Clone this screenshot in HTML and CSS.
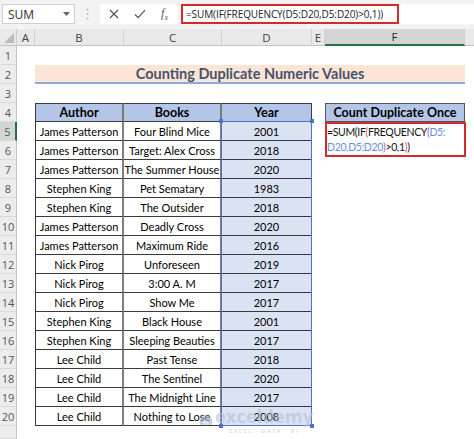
FILE: index.html
```html
<!DOCTYPE html>
<html>
<head>
<meta charset="utf-8">
<link rel="stylesheet" href="styles.css">
</head>
<body>
<div class="toolbar">
  <div class="namebox"><span>SUM</span><svg class="dd" width="7" height="4" viewBox="0 0 7 4"><path d="M0 0h7L3.5 4z" fill="#666"/></svg></div>
  <div class="grip"><svg width="3" height="12" viewBox="0 0 3 12"><circle cx="1.5" cy="1.5" r="1" fill="#bbb"/><circle cx="1.5" cy="6" r="1" fill="#bbb"/><circle cx="1.5" cy="10.5" r="1" fill="#bbb"/></svg></div>
  <div class="fxbox">
    <svg width="10" height="10" viewBox="0 0 10 10"><path d="M1 1L9 9M9 1L1 9" stroke="#555" stroke-width="1.2" fill="none"/></svg>
    <svg width="12" height="10" viewBox="0 0 12 10"><path d="M1 5.5L4.2 8.6L11 1.2" stroke="#555" stroke-width="1.2" fill="none"/></svg>
    <span class="fx">f<sub>x</sub></span>
  </div>
  <div class="formula-bar"><div class="formula">=SUM(IF(FREQUENCY(D5:D20,D5:D20)&gt;0,1))</div></div>
</div>
<div class="sheet">
  <div class="corner"><svg width="10" height="10" viewBox="0 0 10 10"><path d="M10 0V10H0z" fill="#bdbdbd"/></svg></div>
  <div class="ch">A</div><div class="ch">B</div><div class="ch">C</div><div class="ch">D</div><div class="ch">E</div><div class="ch active">F</div><div class="ch last"></div>

  <div class="rh">1</div><div></div><div></div><div></div><div></div><div></div><div></div><div></div>

  <div class="rh">2</div><div></div><div class="title">Counting Duplicate Numeric Values</div><div></div>

  <div class="rh">3</div><div></div><div></div><div></div><div></div><div></div><div></div><div></div>

  <div class="rh">4</div><div></div><div class="th first">Author</div><div class="th">Books</div><div class="th yh">Year</div><div></div><div class="th single">Count Duplicate Once</div><div></div>

  <div class="rh active">5</div><div></div><div class="td first">James Patterson</div><div class="td">Four Blind Mice</div><div class="td yr anchor">2001<div class="range"><i class="h tl"></i><i class="h tr"></i><i class="h bl"></i><i class="h br"></i></div></div><div></div><div class="edit"><div class="editbox">=SUM(IF<span class="p1">(</span>FREQUENCY<span class="p2">(</span><span class="ref">D5:</span><br><span class="ref">D20,D5:D20</span><span class="p2">)</span>&gt;0,1<span class="p1">)</span>)</div></div><div></div>

  <div class="rh">6</div><div></div><div class="td first">James Patterson</div><div class="td">Target: Alex Cross</div><div class="td yr">2018</div><div></div><div></div><div></div>
  <div class="rh">7</div><div></div><div class="td first">James Patterson</div><div class="td">The Summer House</div><div class="td yr">2020</div><div></div><div></div><div></div>
  <div class="rh">8</div><div></div><div class="td first">Stephen King</div><div class="td">Pet Sematary</div><div class="td yr">1983</div><div></div><div></div><div></div>
  <div class="rh">9</div><div></div><div class="td first">Stephen King</div><div class="td">The Outsider</div><div class="td yr">2018</div><div></div><div></div><div></div>
  <div class="rh">10</div><div></div><div class="td first">James Patterson</div><div class="td">Deadly Cross</div><div class="td yr">2020</div><div></div><div></div><div></div>
  <div class="rh">11</div><div></div><div class="td first">James Patterson</div><div class="td">Maximum Ride</div><div class="td yr">2016</div><div></div><div></div><div></div>
  <div class="rh">12</div><div></div><div class="td first">Nick Pirog</div><div class="td">Unforeseen</div><div class="td yr">2019</div><div></div><div></div><div></div>
  <div class="rh">13</div><div></div><div class="td first">Nick Pirog</div><div class="td">3:00 A. M</div><div class="td yr">2017</div><div></div><div></div><div></div>
  <div class="rh">14</div><div></div><div class="td first">Nick Pirog</div><div class="td">Show Me</div><div class="td yr">2017</div><div></div><div></div><div></div>
  <div class="rh">15</div><div></div><div class="td first">Stephen King</div><div class="td">Black House</div><div class="td yr">2001</div><div></div><div></div><div></div>
  <div class="rh">16</div><div></div><div class="td first">Stephen King</div><div class="td">Sleeping Beauties</div><div class="td yr">2017</div><div></div><div></div><div></div>
  <div class="rh">17</div><div></div><div class="td first">Lee Child</div><div class="td">Past Tense</div><div class="td yr">2018</div><div></div><div></div><div></div>
  <div class="rh">18</div><div></div><div class="td first">Lee Child</div><div class="td">The Sentinel</div><div class="td yr">2020</div><div></div><div></div><div></div>
  <div class="rh">19</div><div></div><div class="td first">Lee Child</div><div class="td">The Midnight Line</div><div class="td yr">2017</div><div></div><div></div><div></div>
  <div class="rh">20</div><div></div><div class="td first">Lee Child</div><div class="td">Nothing to Lose</div><div class="td yr">2008</div><div></div><div></div><div></div>
  <div class="rh"></div>
</div>
<div class="watermark">
  <svg width="14" height="13" viewBox="0 0 16 14"><path d="M8 1L15 6.5V13H1V6.5z" fill="#9fb0c8"/><path d="M5 13V8h6v5" fill="#c9d3e2"/></svg>
  <div class="wm-text"><span class="wm-name">exceldemy</span><span class="wm-sub">EXCEL · DATA · BI</span></div>
</div>
</body>
</html>
```

FILE: styles.css
```css
* { box-sizing: border-box; margin: 0; padding: 0; }
html, body { width: 474px; height: 439px; overflow: hidden; background: #fff; }
body { font-family: "Lato", "Carlito", sans-serif; color: #000; position: relative; }

.toolbar { height: 29px; background: #f3f3f3; display: flex; align-items: flex-start; padding-top: 4px; }
.namebox { margin-left: 2px; width: 73px; height: 20px; background: #fff; border: 1px solid #cfcfcf; display: flex; align-items: center; justify-content: space-between; padding: 0 4px 0 5px; font: 12px "Open Sans", sans-serif; color: #333; }
.grip { width: 25px; height: 20px; display: flex; align-items: center; justify-content: center; }
.fxbox { width: 78px; height: 20px; background: #fff; display: flex; align-items: center; justify-content: space-between; padding: 0 10px 0 9px; }
.fx { font: italic 12px "Liberation Serif", serif; color: #555; }
.fx sub { font-size: 8px; }
.formula-bar { flex: 1; margin-left: 3px; height: 20px; background: #fff; }
.formula { width: 218px; height: 20px; border: 2px solid #d42a2e; font: 10px "Open Sans", sans-serif; letter-spacing: -0.1px; line-height: 16px; padding-left: 3px; color: #222; white-space: nowrap; }

.sheet { display: grid; grid-template-columns: 17px 18px 89px 98px 90px 13px 140px 1fr; grid-template-rows: 17px repeat(20, 19px) 1fr; height: 410px; }
.corner { background: #e9e9e9; border-right: 1px solid #cdcdcd; border-bottom: 1px solid #c4c4c4; display: flex; align-items: flex-end; justify-content: flex-end; padding: 0 2px 2px 0; }
.ch { background: #e9e9e9; border-right: 1px solid #d2d2d2; border-bottom: 1px solid #c4c4c4; font: 11.5px "Open Sans", sans-serif; color: #444; display: flex; align-items: center; justify-content: center; }
.ch.active { background: #d4d4d4; border-bottom: 2px solid #217346; color: #222; }
.ch.last { border-right: none; }
.rh { background: #ececec; border-right: 1px solid #c8c8c8; border-bottom: 1px solid #dadada; font: 11px "Open Sans", sans-serif; color: #555; display: flex; align-items: center; justify-content: center; }
.rh.active { background: #d4d4d4; border-right: 2px solid #217346; color: #3b6b4b; }

.title { grid-column: span 5; background: #fce4d6; border-bottom: 2px solid #8ea9db; font-weight: 700; font-size: 14.5px; color: #44546a; display: flex; align-items: center; justify-content: center; }

.th { background: #b4c6e7; border-top: 1px solid #3a3a3a; border-bottom: 1px solid #3a3a3a; border-right: 2px solid #7a7a7a; font-weight: 700; font-size: 12.5px; display: flex; align-items: center; justify-content: center; white-space: nowrap; }
.th.first { border-left: 1px solid #3a3a3a; }
.th.yh { border-right: 1px solid #3a3a3a; }
.th.single { border: 1px solid #555; }

.td { border-bottom: 1px solid #3a3a3a; border-right: 2px solid #808080; font-size: 11px; display: flex; align-items: center; justify-content: center; white-space: nowrap; }
.td.first { border-left: 1px solid #3a3a3a; }
.td.yr { background: #dae3f3; border-right: 1px solid #3a3a3a; }
.anchor { position: relative; }
.range { position: absolute; left: -1px; top: -1px; width: 91px; height: 305px; border: 1.5px solid #4f72c4; pointer-events: none; }
.h { position: absolute; width: 4px; height: 4px; background: #4f72c4; }
.tl { left: -3px; top: -3px; }
.tr { right: -3px; top: -3px; }
.bl { left: -3px; bottom: -3px; }
.br { right: -3px; bottom: -3px; }

.edit { position: relative; }
.editbox { position: absolute; left: 0; top: 0; width: 141px; height: 35px; border: 2px solid #d42a2e; background: #fff; z-index: 2; font-size: 10.5px; letter-spacing: -0.35px; line-height: 15px; padding: 1px 0 0 0; white-space: nowrap; color: #111; }
.p1 { color: #e2554f; }
.p2 { color: #9b59b6; }
.ref { color: #6a8fd8; }

.watermark { position: absolute; left: 199px; top: 404px; display: flex; align-items: center; gap: 2px; opacity: 0.6; }
.wm-text { display: flex; flex-direction: column; align-items: center; line-height: 1; }
.wm-name { font: 700 18px "Open Sans", sans-serif; color: #b3c1d6; letter-spacing: 0.2px; }
.wm-sub { font: 600 5.5px "Open Sans", sans-serif; color: #b3c1d6; letter-spacing: 1.5px; margin-top: -1px; }
```
